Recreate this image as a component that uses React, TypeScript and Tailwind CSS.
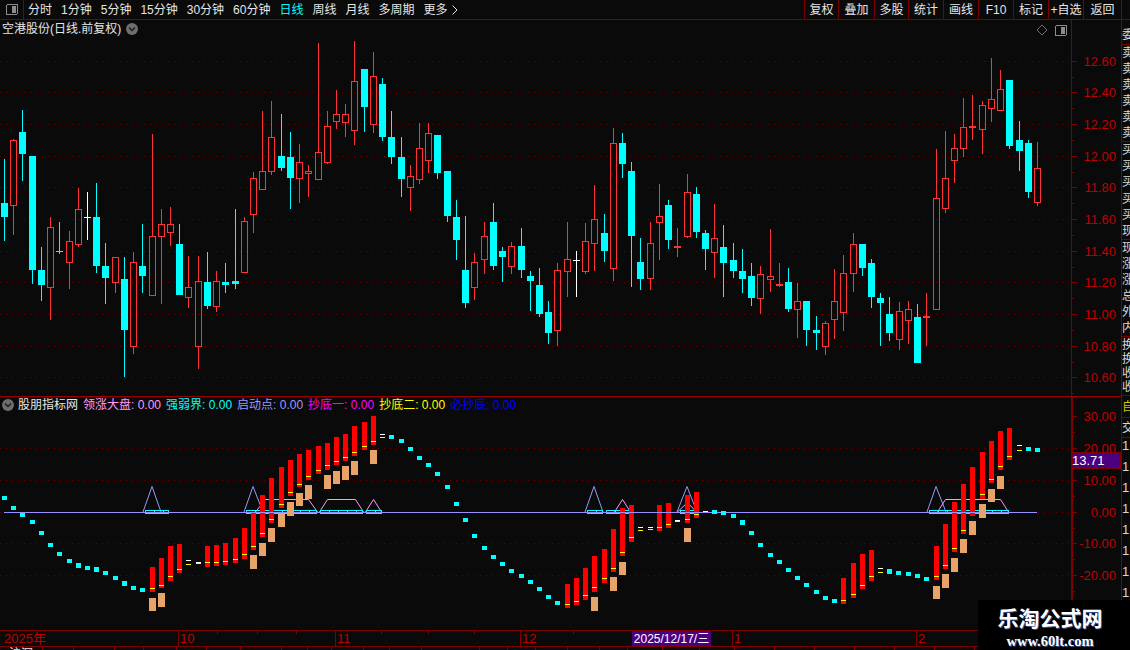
import React from "react";

type K = "c" | "r" | "f" | "C" | "w";
type Row = [number, number, number, number, number, K];

const groups: { ox: number; rows: Row[] }[] = [
  {
    ox: 0,
    rows: [
      [13, 357, 489, 531, 603, "c"], [40, 297, 301, 499, 585, "r"], [67, 210, 276, 342, 423, "c"], [97, 348, 348, 690, 732, "c"],
      [124, 621, 690, 735, 783, "c"], [151, 531, 562, 743, 840, "r"], [178, 546, 634, 634, 642, "C"], [208, 573, 604, 668, 747, "r"],
      [235, 444, 508, 614, 621, "r"], [262, 456, 532, 532, 600, "w"], [289, 429, 531, 678, 699, "c"], [316, 609, 678, 714, 792, "c"],
      [346, 652, 652, 728, 759, "r"], [373, 651, 717, 870, 1011, "c"], [400, 636, 667, 920, 942, "r"], [427, 552, 678, 708, 759, "c"],
      [457, 282, 589, 767, 767, "r"], [484, 507, 553, 590, 792, "r"], [511, 501, 553, 578, 618, "r"], [538, 552, 612, 765, 765, "c"],
      [565, 648, 742, 773, 804, "r"], [595, 648, 724, 920, 987, "r"], [622, 636, 726, 798, 807, "c"], [649, 693, 724, 800, 816, "r"],
      [676, 669, 726, 735, 759, "c"], [706, 507, 723, 732, 747, "c"], [733, 531, 544, 700, 700, "r"], [760, 396, 415, 524, 579, "r"],
      [787, 213, 394, 449, 449, "r"], [814, 183, 292, 395, 405, "r"],
    ],
  },
  {
    ox: 280,
    rows: [
      [4, 222, 348, 384, 393, "c"], [31, 276, 351, 414, 507, "c"], [58, 312, 367, 416, 489, "r"], [85, 375, 394, 401, 471, "r"],
      [115, 9, 337, 419, 419, "r"], [142, 213, 259, 368, 372, "r"], [169, 150, 223, 245, 267, "r"], [196, 192, 223, 248, 291, "r"],
      [223, 3, 124, 272, 315, "r"], [253, 87, 87, 201, 276, "c"], [280, 36, 109, 254, 279, "r"], [307, 114, 132, 291, 303, "c"],
      [334, 213, 291, 351, 372, "c"], [364, 291, 351, 417, 471, "c"], [391, 375, 409, 443, 513, "r"], [418, 249, 325, 419, 432, "r"],
      [445, 249, 280, 362, 399, "r"], [472, 285, 285, 399, 417, "c"], [502, 393, 393, 528, 546, "c"], [529, 480, 531, 600, 660, "c"],
      [556, 528, 690, 789, 804, "c"], [583, 639, 667, 743, 780, "r"], [613, 546, 589, 659, 702, "r"], [640, 489, 546, 678, 690, "c"],
      [667, 621, 633, 651, 726, "c"], [694, 606, 619, 680, 702, "r"], [724, 564, 618, 690, 714, "c"], [751, 693, 708, 723, 813, "c"],
      [778, 684, 735, 822, 831, "c"], [805, 783, 816, 879, 912, "c"], [832, 669, 691, 872, 918, "r"],
    ],
  },
  {
    ox: 560,
    rows: [
      [22, 546, 658, 695, 771, "r"], [49, 633, 661, 661, 771, "w"], [76, 549, 604, 695, 702, "r"], [103, 435, 538, 611, 693, "r"],
      [133, 522, 579, 633, 666, "c"], [160, 264, 310, 686, 723, "r"], [187, 279, 309, 372, 414, "c"], [214, 366, 393, 588, 741, "c"],
      [241, 594, 666, 717, 750, "c"], [271, 546, 610, 716, 750, "r"], [298, 432, 529, 548, 660, "r"], [325, 480, 495, 600, 627, "c"],
      [352, 564, 618, 624, 651, "f"], [382, 402, 457, 590, 594, "r"], [409, 441, 462, 576, 594, "c"], [436, 570, 579, 627, 690, "c"],
      [463, 492, 595, 638, 714, "r"], [490, 555, 621, 669, 771, "c"], [520, 609, 660, 693, 714, "c"], [547, 627, 693, 717, 759, "c"],
      [574, 669, 708, 774, 798, "c"], [601, 678, 703, 776, 822, "r"], [631, 567, 709, 719, 756, "r"], [658, 669, 732, 738, 741, "f"],
      [685, 684, 726, 807, 816, "c"], [712, 729, 784, 809, 894, "r"], [739, 783, 783, 870, 918, "c"], [769, 828, 870, 879, 930, "c"],
      [796, 843, 850, 920, 945, "r"], [823, 687, 784, 839, 897, "r"],
    ],
  },
  {
    ox: 840,
    rows: [
      [10, 645, 700, 818, 873, "r"], [40, 579, 613, 701, 756, "r"], [67, 612, 612, 684, 708, "c"], [94, 657, 669, 771, 804, "c"],
      [121, 759, 774, 789, 918, "c"], [148, 771, 822, 879, 903, "c"], [178, 786, 814, 899, 930, "r"], [205, 783, 808, 842, 912, "r"],
      [232, 792, 831, 969, 969, "c"], [259, 759, 828, 834, 918, "f"], [289, 327, 475, 809, 809, "r"], [316, 273, 415, 506, 519, "r"],
      [343, 282, 325, 362, 429, "r"], [370, 174, 262, 326, 351, "r"], [397, 165, 258, 264, 300, "f"], [427, 183, 196, 269, 342, "r"],
      [454, 54, 178, 206, 246, "r"], [481, 90, 148, 212, 213, "r"], [508, 120, 120, 318, 327, "c"], [538, 243, 300, 333, 393, "c"],
      [565, 300, 309, 456, 474, "c"], [592, 306, 385, 488, 498, "r"],
    ],
  },
];

const RED = "#ff3333";
const CYAN = "#00ffff";

function Candle({ ox, row }: { ox: number; row: Row }) {
  const [c, wt, bt, bb, wb, k] = row;
  const x = ox + Math.floor(c / 3);
  const y = (v: number) => 40 + Math.round(v / 3);
  const T = y(wt), B = y(bt), E = y(bb), W = y(wb);
  if (k === "w" || k === "C") {
    const col = k === "w" ? "#ffffff" : CYAN;
    return (
      <g fill={col}>
        <rect x={x} y={T} width={1} height={W - T} />
        <rect x={x - 3} y={B} width={7} height={1} />
      </g>
    );
  }
  if (k === "f") {
    return (
      <g fill={RED}>
        <rect x={x} y={T} width={1} height={W - T} />
        <rect x={x - 3} y={B} width={7} height={2} />
      </g>
    );
  }
  if (k === "c") {
    return (
      <g fill={CYAN}>
        <rect x={x} y={T} width={1} height={W - T} />
        <rect x={x - 3} y={B} width={7} height={E - B} />
      </g>
    );
  }
  return (
    <g>
      <rect x={x} y={T} width={1} height={Math.max(0, B - T)} fill={RED} />
      <rect x={x} y={E} width={1} height={Math.max(0, W - E)} fill={RED} />
      <rect x={x - 2.5} y={B + 0.5} width={6} height={E - B - 1} fill="none" stroke={RED} strokeWidth={1} />
    </g>
  );
}

const mainGrid = [61, 92, 124, 156, 187, 219, 251, 282, 314, 346, 377];
const mainLabels = ["12.60", "12.40", "12.20", "12.00", "11.80", "11.60", "11.40", "11.20", "11.00", "10.80", "10.60"];

const bars = [
  [152, 567, 592, 588], [161, 558, 588, 585], [170, 546, 581, 576], [179, 544, 573, 569], [207, 546, 567, 562], [216, 545, 566, 562],
  [225, 543, 565, 561], [235, 538, 563, 559], [244, 528, 559, 554], [253, 513, 550, 546], [262, 495, 537, 533], [271, 478, 523, 519],
  [281, 467, 508, 504], [290, 460, 496, 492], [299, 454, 487, 484], [308, 450, 480, 476], [318, 446, 474, 470], [327, 443, 470, 465],
  [336, 437, 465, 461], [345, 434, 461, 457], [354, 426, 456, 452], [364, 422, 450, 446], [373, 416, 445, 441],
  [567, 584, 608, 604], [576, 578, 605, 601], [585, 568, 600, 595], [594, 556, 592, 587], [604, 549, 583, 578], [613, 529, 572, 568],
  [622, 508, 556, 552], [631, 505, 542, 537], [659, 505, 531, 527], [668, 503, 528, 524], [687, 495, 523, 519], [696, 492, 518, 514],
  [843, 578, 604, 600], [853, 563, 598, 594], [862, 554, 589, 585], [871, 550, 581, 576],
  [936, 546, 580, 576], [945, 524, 569, 565], [954, 502, 552, 548], [963, 484, 534, 530], [972, 467, 516, 512], [982, 452, 499, 494],
  [991, 441, 483, 479], [1000, 431, 470, 466], [1009, 428, 460, 456],
];
const pairs = [[188, 560, 564], [198, 562, 563], [382, 434, 437], [640, 527, 530], [650, 527, 529], [677, 520, 521], [880, 568, 572], [1019, 445, 450]];
const peach = [
  [152, 598, 611], [161, 593, 607], [253, 555, 569], [262, 543, 556], [271, 528, 542], [281, 514, 527], [290, 502, 516], [299, 493, 506],
  [308, 485, 499], [327, 475, 489], [336, 471, 484], [345, 466, 480], [354, 461, 475], [373, 450, 464], [594, 597, 611], [613, 577, 591],
  [622, 562, 575], [687, 528, 542], [936, 586, 599], [945, 574, 588], [954, 558, 572], [963, 539, 553], [972, 521, 535], [982, 504, 518],
  [991, 489, 502], [1000, 476, 489],
];
const squares = [
  [4, 498], [13, 508], [22, 515], [32, 522], [41, 533], [50, 545], [59, 554], [69, 561], [78, 565, 1], [87, 568], [96, 569, 1], [105, 573], [115, 578], [124, 583, 1], [133, 588], [142, 590],
  [391, 437], [401, 441], [410, 449], [419, 458], [428, 465], [437, 474], [447, 487], [456, 504], [465, 520], [474, 536], [484, 548], [493, 557], [502, 564], [511, 571], [521, 576], [530, 582], [539, 589], [548, 597], [557, 603],
  [714, 512], [723, 513], [733, 516], [742, 522, 1], [751, 533], [760, 545], [770, 555], [779, 562], [788, 570], [797, 578], [806, 585], [816, 592], [825, 598], [834, 601],
  [889, 571, 1], [898, 573], [908, 574], [917, 576], [926, 579], [1028, 449], [1037, 450],
];
const blueTri = [[143, 152, 161], [244, 253, 263], [585, 594, 603], [677, 687, 697], [927, 936, 946]];
const pinkShapes = [
  "255.5,512 265.5,499.5 308.5,499.5 317.5,512",
  "319.5,512 327.5,499.5 355.5,499.5 363.5,512",
  "365.5,512 373.5,499.5 381.5,512",
  "614.5,512 622.5,499.5 630.5,512",
  "677.5,512 687.5,502.5 696.5,512",
  "937.5,512 945.5,499.5 1000.5,499.5 1008.5,512",
];
const cyanRects = [[145, 168], [246, 316], [320, 362], [366, 381], [587, 602], [606, 630], [680, 696], [929, 1008]];

const toolTabs = ["分时", "1分钟", "5分钟", "15分钟", "30分钟", "60分钟", "日线", "周线", "月线", "多周期", "更多"];
const rightBtns: [string, string][] = [
  ["复权", "w-[34px]"], ["叠加", "w-[36px]"], ["多股", "w-[34px]"], ["统计", "w-[35px]"], ["画线", "w-[35px]"],
  ["F10", "w-[35px]"], ["标记", "w-[35px]"], ["+自选", "w-[35px]"], ["返回", "w-[38px]"],
];
const legend: [string, string][] = [
  ["领涨大盘: 0.00", "text-[#ff99ff]"],
  ["强弱界: 0.00", "text-[#00ffff]"],
  ["启动点: 0.00", "text-[#9999ff]"],
  ["抄底一: 0.00", "text-[#ff00ff]"],
  ["抄底二: 0.00", "text-[#ffff00]"],
  ["必抄底: 0.00", "text-[#0000ff]"],
];
const stripTabs = [43, 31, 41, 29, 33, 30, 34, 41, 26, 24, 32, 26, 32, 58, 28, 28, 32, 32, 28, 35, 37, 35, 40, 40, 40, 40, 40, 40, 40, 40, 40];

function Chevron() {
  return (
    <svg width="12" height="12" viewBox="0 0 12 12" className="shrink-0">
      <circle cx="6" cy="6" r="6" fill="#6e6e6e" />
      <path d="M3 4.5 L6 7.5 L9 4.5" fill="none" stroke="#1c1c1c" strokeWidth="1.4" />
    </svg>
  );
}

function PanelIcon() {
  return (
    <svg width="12" height="11" viewBox="0 0 12 11" shapeRendering="crispEdges">
      <rect x="0.5" y="0.5" width="11" height="10" rx="1.5" fill="none" stroke="#8c8c8c" />
      <rect x="6" y="2" width="4" height="7" fill="#8c8c8c" />
    </svg>
  );
}

export default function App() {
  return (
    <div
      className="relative flex h-[650px] w-[1130px] flex-col overflow-hidden bg-[#0a0a0a] text-[12px] leading-none text-[#e6e6e6]"
      style={{ fontFamily: '"Liberation Sans","Noto Sans CJK SC",sans-serif' }}
    >
      {/* toolbar */}
      <div className="flex h-[20px] shrink-0 items-center border-b border-[#800000]">
        <div className="flex h-full w-[24px] items-center justify-center border-r border-[#800000]">
          <PanelIcon />
        </div>
        <div className="ml-[4px] flex items-center gap-[9px]">
          {toolTabs.map((t) => (
            <span key={t} className={t === "日线" ? "text-[#00ffff]" : ""}>
              {t}
            </span>
          ))}
          <svg width="6" height="10" viewBox="0 0 6 10" className="-ml-[5px]">
            <path d="M0.5 0.5 L5 5 L0.5 9.5" fill="none" stroke="#e6e6e6" />
          </svg>
        </div>
        <div className="ml-auto mr-[8px] flex h-full border-l border-[#800000]">
          {rightBtns.map(([t, w]) => (
            <div key={t} className={`${w} flex h-full items-center justify-center whitespace-nowrap border-r border-[#800000]`}>
              {t}
            </div>
          ))}
        </div>
      </div>

      {/* body */}
      <div className="flex min-h-0 flex-1">
        <div className="flex w-[1122px] shrink-0 flex-col border-r border-[#800000]">
          {/* main chart */}
          <div className="flex h-[377px] shrink-0 border-b border-[#990000]">
            <div className="relative w-[1071px] shrink-0">
              <svg width="1071" height="376" viewBox="0 20 1071 376" shapeRendering="crispEdges" className="block">
                {mainGrid.map((y) => (
                  <line key={y} x1="0" x2="1071" y1={y + 0.5} y2={y + 0.5} stroke="#6b0000" strokeDasharray="1 5" />
                ))}
                {groups.map((g) => g.rows.map((r) => <Candle key={`${g.ox}-${r[0]}`} ox={g.ox} row={r} />))}
              </svg>
              <div className="absolute left-[2px] top-[3px] flex items-center gap-[5px]">
                <span>空港股份(日线.前复权)</span>
                <Chevron />
              </div>
              <div className="absolute right-[4px] top-[4px] flex items-center gap-[7px]">
                <svg width="12" height="12" viewBox="0 0 12 12">
                  <path d="M6 1 L11 6 L6 11 L1 6 Z" fill="none" stroke="#6e6e6e" />
                </svg>
                <PanelIcon />
              </div>
            </div>
            <div className="w-[50px] shrink-0 border-l border-[#800000]">
              <svg width="49" height="376" viewBox="1072 20 49 376" shapeRendering="crispEdges" className="block">
                {mainGrid.map((y, i) => (
                  <g key={y}>
                    <line x1="1071" x2="1077" y1={y + 0.5} y2={y + 0.5} stroke="#800000" />
                    <line x1="1071" x2="1074" y1={y + 16.5} y2={y + 16.5} stroke="#800000" />
                    <text x="1116" y={y + 5} textAnchor="end" fontSize="13" fill="#c00000">
                      {mainLabels[i]}
                    </text>
                  </g>
                ))}
              </svg>
            </div>
          </div>

          {/* indicator */}
          <div className="flex h-[234px] shrink-0 border-b border-[#800000]">
            <div className="relative w-[1071px] shrink-0">
              <svg width="1071" height="233" viewBox="0 397 1071 233" shapeRendering="crispEdges" className="block">
                {[448, 480, 512, 543, 575].map((y) => (
                  <line key={y} x1="0" x2="1071" y1={y + 0.5} y2={y + 0.5} stroke="#6b0000" strokeDasharray="1 5" />
                ))}
                {blueTri.map(([a, b, c]) => (
                  <polyline key={b} points={`${a},512 ${b},486.5 ${c},512`} fill="none" stroke="#9999ff" shapeRendering="auto" />
                ))}
                {pinkShapes.map((p) => (
                  <polyline key={p} points={p} fill="none" stroke="#ff99ff" shapeRendering="auto" />
                ))}
                {cyanRects.map(([a, b]) => (
                  <g key={a}>
                    <rect x={a + 0.5} y={510.5} width={b - a} height={3} fill="none" stroke="#00ffff" />
                    {Array.from({ length: Math.floor((b - a) / 9) }, (_, i) => (
                      <rect key={i} x={a + 9 * (i + 1)} y={510} width={1} height={2} fill="#00ffff" />
                    ))}
                  </g>
                ))}
                {bars.map(([x, t, b, ym]) => (
                  <g key={x}>
                    <rect x={x - 2} y={t} width={5} height={b - t} fill="#ff0000" />
                    <rect x={x - 2} y={ym} width={5} height={1} fill="#ffff00" />
                  </g>
                ))}
                {pairs.map(([x, w, ym]) => (
                  <g key={x}>
                    <rect x={x - 2} y={w} width={5} height={1} fill="#ffffff" />
                    <rect x={x - 2} y={ym} width={5} height={1} fill="#ffff00" />
                  </g>
                ))}
                <rect x={703} y={511} width={5} height={1} fill="#ffffff" />
                <rect x={4} y={512} width={1033} height={1} fill="#9a8fff" />
                {peach.map(([x, t, b]) => (
                  <rect key={x} x={x - 3} y={t} width={7} height={b - t} fill="#e8a468" />
                ))}
                {squares.map(([x, y, l]) => (
                  <rect key={x} x={x - 2} y={y - 2} width={5} height={l ? 5 : 4} fill="#00ffff" />
                ))}
              </svg>
              <div className="absolute left-[2px] top-[2px] flex items-center">
                <Chevron />
                <span className="ml-[4px] mr-[5px]">股朋指标网</span>
                <div className="flex gap-[5px]">
                  {legend.map(([t, c]) => (
                    <span key={t} className={`${c} whitespace-pre`}>
                      {t}
                    </span>
                  ))}
                </div>
              </div>
            </div>
            <div className="w-[50px] shrink-0 border-l-2 border-[#800000]">
              <svg width="48" height="233" viewBox="1073 397 48 233" shapeRendering="crispEdges" className="block overflow-visible">
                {[
                  [416, "30.00"], [448, "20.00"], [480, "10.00"], [512, "0.00"], [543, "-10.00"], [575, "-20.00"],
                ].map(([y, t]) => (
                  <g key={t as string}>
                    <line x1="1073" x2="1077" y1={(y as number) + 0.5} y2={(y as number) + 0.5} stroke="#800000" />
                    <line x1="1073" x2="1075" y1={(y as number) + 16.5} y2={(y as number) + 16.5} stroke="#800000" />
                    <text x="1116" y={(y as number) + 5} textAnchor="end" fontSize="13" fill="#c00000">
                      {t}
                    </text>
                  </g>
                ))}
                <rect x="1072.5" y="452.5" width="47.5" height="16" fill="#4b0082" stroke="#800000" />
                <text x="1072" y="465" fontSize="13" fill="#ffffff">
                  13.71
                </text>
              </svg>
            </div>
          </div>

          {/* time axis */}
          <div className="relative h-[16px] shrink-0 border-b border-[#800000] text-[13px] text-[#c00000]">
            <svg width="1121" height="15" className="block" shapeRendering="crispEdges">
              {[178, 335, 520, 732, 916].map((x) => (
                <line key={x} x1={x + 0.5} x2={x + 0.5} y1="0" y2="15" stroke="#800000" />
              ))}
              {[217, 257, 296, 381, 428, 474, 573].map((x) => (
                <line key={x} x1={x + 0.5} x2={x + 0.5} y1="0" y2="3" stroke="#800000" />
              ))}
              <text x="4" y="12" fontSize="13" fill="#c00000">2025年</text>
              <text x="180" y="12" fontSize="13" fill="#c00000">10</text>
              <text x="337" y="12" fontSize="13" fill="#c00000">11</text>
              <text x="522" y="12" fontSize="13" fill="#c00000">12</text>
              <text x="734" y="12" fontSize="13" fill="#c00000">1</text>
              <text x="918" y="12" fontSize="13" fill="#c00000">2</text>
            </svg>
            <div className="absolute left-[632px] top-0 flex h-[15px] w-[79px] items-center justify-center whitespace-nowrap bg-[#4b0082] text-[12px] text-white">
              2025/12/17/三
            </div>
          </div>

          {/* bottom strip */}
          <div className="flex min-h-0 flex-1 overflow-hidden">
            {stripTabs.map((w, i) => (
              <div key={i} className="h-full shrink-0 overflow-hidden border-r border-[#800000]" style={{ width: w }}>
                {i === 0 ? <span className="ml-[9px] block pt-[1px]">沪深</span> : null}
              </div>
            ))}
          </div>
        </div>

        {/* side strip */}
        <div className="flex w-[8px] shrink-0 flex-col overflow-hidden text-[#d8d8d8]">
          <div className="h-[25px] shrink-0 border-b border-[#800000] pt-[9px]">
            <div className="whitespace-nowrap">委比</div>
          </div>
          <div className="flex h-[97px] shrink-0 flex-col justify-between border-b border-[#800000] py-[2px]">
            {["卖", "卖", "卖", "卖", "卖", "卖"].map((t, i) => <span key={i}>{t}</span>)}
          </div>
          <div className="flex h-[98px] shrink-0 flex-col justify-between border-b border-[#800000] py-[2px]">
            {["买", "买", "买", "买", "买", "现"].map((t, i) => <span key={i}>{t}</span>)}
          </div>
          <div className="flex h-[97px] shrink-0 flex-col justify-between border-b border-[#800000] py-[2px]">
            {["现", "涨", "涨", "总", "外", "内"].map((t, i) => <span key={i}>{t}</span>)}
          </div>
          <div className="flex h-[59px] shrink-0 flex-col justify-between border-b border-[#800000] py-[2px]">
            {["换", "换", "收", "收"].map((t, i) => <span key={i}>{t}</span>)}
          </div>
          <div className="h-[22px] shrink-0 border-b border-[#800000] pt-[5px] text-[#c8c800]">自</div>
          <div className="h-[20px] shrink-0 border-b border-[#800000] pt-[4px]">交</div>
          <div className="flex flex-col gap-[8px] pt-[1px] text-[13px]">
            {[1, 2, 3, 4, 5, 6, 7, 8].map((n) => <span key={n}>1</span>)}
          </div>
        </div>
      </div>

      {/* watermark */}
      <div className="absolute bottom-0 right-0 flex h-[50px] w-[152px] flex-col items-center bg-black pr-[8px] text-white">
        <span className="mt-[8px] text-[21px] font-bold [text-shadow:1px_1px_0_#3a4a8a]">乐淘公式网</span>
        <span className="mt-[5px] text-[14.5px] font-bold [text-shadow:1px_1px_0_#3a4a8a]" style={{ fontFamily: '"Liberation Serif",serif' }}>
          www.60lt.com
        </span>
      </div>
    </div>
  );
}
